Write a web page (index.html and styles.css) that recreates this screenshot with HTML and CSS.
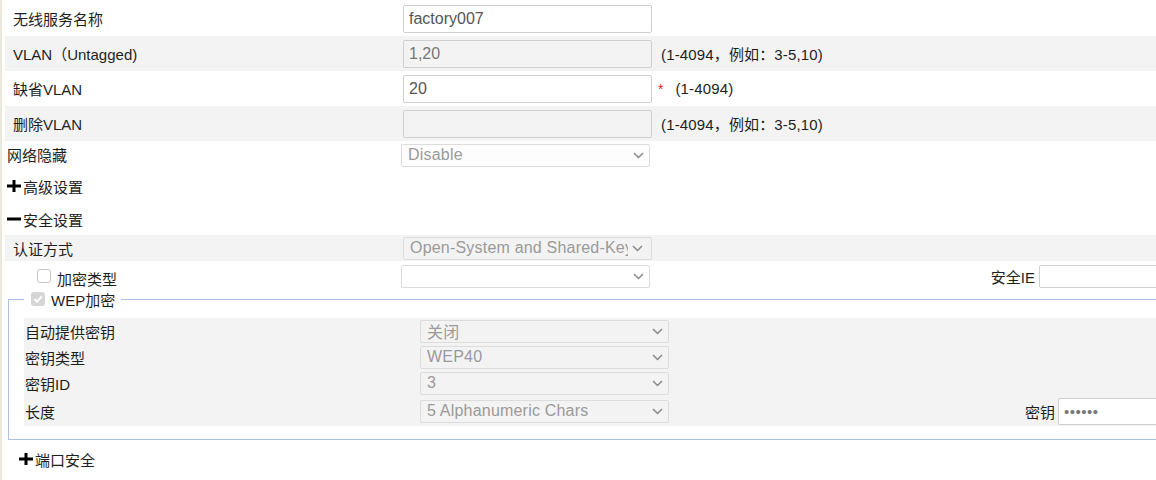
FILE: index.html
```html
<!DOCTYPE html>
<html lang="zh-CN">
<head>
<meta charset="utf-8">
<title>无线服务</title>
<link rel="stylesheet" href="styles.css">
</head>
<body>
<div class="page">
  <div class="row h35">
    <div class="lbl">无线服务名称</div>
    <div class="inp">factory007</div>
  </div>
  <div class="row h35 gray">
    <div class="lbl">VLAN（Untagged)</div>
    <div class="inp dis">1,20</div>
    <span class="hint">(1-4094，例如：3-5,10)</span>
  </div>
  <div class="row h35">
    <div class="lbl">缺省VLAN</div>
    <div class="inp">20</div>
    <span class="star">*</span><span class="hint2">(1-4094)</span>
  </div>
  <div class="row h35 gray">
    <div class="lbl">删除VLAN</div>
    <div class="inp dis"></div>
    <span class="hint">(1-4094，例如：3-5,10)</span>
  </div>
  <div class="row h28">
    <div class="lbl2">网络隐藏</div>
    <div class="sel light"><span class="val">Disable</span><svg class="chev" viewBox="0 0 11 7" width="11" height="7"><polyline points="1,1 5.5,5.5 10,1"/></svg></div>
  </div>
  <div class="exp h34">
    <svg class="ico" viewBox="0 0 14 12" width="14" height="12"><rect x="0" y="4.5" width="14" height="3"/><rect x="5.5" y="0" width="3" height="12"/></svg>
    <span>高级设置</span>
  </div>
  <div class="exp h32">
    <svg class="ico" viewBox="0 0 14 12" width="14" height="12"><rect x="0" y="4.5" width="14" height="3"/></svg>
    <span>安全设置</span>
  </div>
  <div class="row h26 gray">
    <div class="lbl">认证方式</div>
    <div class="sel grey narrow"><span class="val">Open-System and Shared-Key</span><svg class="chev" viewBox="0 0 11 7" width="11" height="7"><polyline points="1,1 5.5,5.5 10,1"/></svg></div>
  </div>
  <div class="row h30">
    <div class="lbl3"><span class="cb"></span><span class="cbl">加密类型</span></div>
    <div class="sel white"><span class="val"></span><svg class="chev" viewBox="0 0 11 7" width="11" height="7"><polyline points="1,1 5.5,5.5 10,1"/></svg></div>
    <div class="spacer"></div>
    <span class="rl">安全IE</span>
    <div class="inp ie"></div>
  </div>
  <fieldset class="fs">
    <legend class="lg"><svg class="cbx" viewBox="0 0 14 14" width="14" height="14"><rect x="0" y="0" width="14" height="14" rx="3" fill="#d6d6d6"/><polyline points="3.5,7.2 6,9.7 10.7,4.3" fill="none" stroke="#fff" stroke-width="2"/></svg><span>WEP加密</span></legend>
    <div class="inner">
      <div class="row h26">
        <div class="lbl4">自动提供密钥</div>
        <div class="sel grey"><span class="val">关闭</span><svg class="chev" viewBox="0 0 11 7" width="11" height="7"><polyline points="1,1 5.5,5.5 10,1"/></svg></div>
      </div>
      <div class="row h26">
        <div class="lbl4">密钥类型</div>
        <div class="sel grey"><span class="val">WEP40</span><svg class="chev" viewBox="0 0 11 7" width="11" height="7"><polyline points="1,1 5.5,5.5 10,1"/></svg></div>
      </div>
      <div class="row h26">
        <div class="lbl4">密钥ID</div>
        <div class="sel grey"><span class="val">3</span><svg class="chev" viewBox="0 0 11 7" width="11" height="7"><polyline points="1,1 5.5,5.5 10,1"/></svg></div>
      </div>
      <div class="row h30">
        <div class="lbl4">长度</div>
        <div class="sel grey"><span class="val">5 Alphanumeric Chars</span><svg class="chev" viewBox="0 0 11 7" width="11" height="7"><polyline points="1,1 5.5,5.5 10,1"/></svg></div>
        <div class="spacer"></div>
        <span class="rl2">密钥</span>
        <div class="inp key">••••••</div>
      </div>
    </div>
  </fieldset>
  <div class="exp h38 port">
    <svg class="ico" viewBox="0 0 14 12" width="14" height="12"><rect x="0" y="4.5" width="14" height="3"/><rect x="5.5" y="0" width="3" height="12"/></svg>
    <span>端口安全</span>
  </div>
</div>
</body>
</html>
```
FILE: styles.css
```css
html, body {
  margin: 0;
  padding: 0;
  overflow: hidden;
  background: #fff;
}
body {
  font-family: "Liberation Sans", "Noto Sans CJK SC", sans-serif;
  font-size: 15px;
  color: #1e1e1e;
}
.page {
  box-sizing: border-box;
  width: 1174px;
  min-height: 100vh;
  border-left: 2px solid #ebe8dc;
  padding: 1px 0 0 3px;
}
.row {
  display: flex;
  align-items: center;
}
.gray { background: #f3f3f3; }
.h35 { height: 35px; }
.h34 { height: 34px; }
.h32 { height: 32px; }
.h30 { height: 30px; }
.h28 { height: 28px; }
.h26 { height: 26px; }
.h38 { height: 38px; }

.lbl {
  flex-shrink: 0;
  width: 390px;
  padding-left: 8px;
  white-space: nowrap;
}
.lbl2 {
  flex-shrink: 0;
  width: 394px;
  padding-left: 2px;
  padding-bottom: 2px;
}
.lbl3 {
  flex-shrink: 0;
  width: 364px;
  padding-left: 32px;
  display: flex;
  align-items: center;
}
.lbl4 {
  flex-shrink: 0;
  width: 395px;
  padding-left: 1px;
}
.inp {
  box-sizing: border-box;
  flex-shrink: 0;
  width: 249px;
  height: 28px;
  border: 1px solid #cfcfcf;
  border-radius: 2px;
  background: #fff;
  font-size: 16px;
  color: #555;
  padding: 0 5px;
  display: flex;
  align-items: center;
}
.inp.dis {
  background: #f3f3f3;
  color: #777;
}
.inp.ie {
  width: 135px;
  height: 23px;
}
.inp.key {
  width: 115px;
  height: 27px;
  color: #777;
  font-size: 15px;
  letter-spacing: 0.5px;
}
.hint {
  margin-left: 9px;
  color: #1e1e1e;
  letter-spacing: 0.15px;
}
.star {
  margin-left: 6px;
  margin-right: 12px;
  color: #e51c1c;
  font-size: 14px;
}
.hint2 { color: #1e1e1e; letter-spacing: 0.15px; }

.sel {
  box-sizing: border-box;
  flex-shrink: 0;
  width: 249px;
  height: 23px;
  border: 1px solid #dcdcdc;
  border-radius: 2px;
  padding: 0 5px 0 6px;
  display: flex;
  align-items: center;
  justify-content: space-between;
  font-size: 16px;
  color: #9a9a9a;
}
.sel.narrow { padding-right: 8px; }
.sel.light { background: #fdfdfd; }
.sel.grey { background: #f3f3f3; }
.sel.white { background: #fff; }
.val {
  flex: 1;
  min-width: 0;
  overflow: hidden;
  white-space: nowrap;
  letter-spacing: 0.2px;
}
.chev {
  flex-shrink: 0;
  margin-left: 3px;
}
.sel.narrow .chev { margin-left: 4px; }
.chev polyline {
  fill: none;
  stroke: #888;
  stroke-width: 1.5;
}

.exp {
  display: flex;
  align-items: center;
  padding-left: 2px;
}
.exp.port { padding-left: 14px; }
.ico {
  margin-right: 2px;
  fill: #000;
}

.cb {
  box-sizing: border-box;
  width: 14px;
  height: 14px;
  border: 1px solid #c4c4c4;
  border-radius: 3px;
  background: #fff;
  margin-right: 6px;
}
.cbl { padding-top: 4px; }
.spacer { flex: 1; }
.rl { margin-right: 4px; }
.rl2 { margin-right: 3px; }

.fs {
  margin: -1px 0 0 3px;
  border: 1px solid #abc1e6;
  padding: 10px 0 13px 15px;
  min-width: 0;
}
.lg {
  display: flex;
  align-items: center;
  height: 18px;
  padding: 0 6px 0 7px;
}
.cbx { margin-right: 6px; }
.inner { background: #f3f3f3; }
```
